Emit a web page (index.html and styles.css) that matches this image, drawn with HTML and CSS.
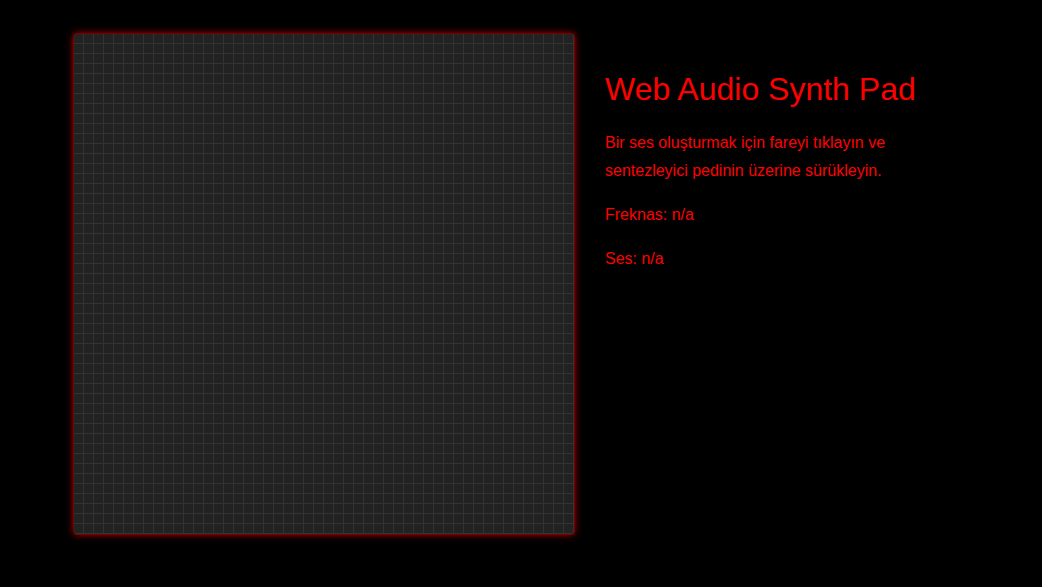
FILE: index.html
```html
<!DOCTYPE html>
<html lang="tr">
<head>
<meta charset="utf-8">
<title>Web Audio Synth Pad</title>
<link rel="stylesheet" href="styles.css">
</head>
<body>
<div class="app">
  <div class="pad"></div>
  <div class="info">
    <h1 class="title">Web Audio Synth Pad</h1>
    <p class="text">Bir ses oluşturmak için fareyi tıklayın ve sentezleyici pedinin üzerine sürükleyin.</p>
    <p class="text">Freknas: <span>n/a</span></p>
    <p class="text">Ses: <span>n/a</span></p>
  </div>
</div>
</body>
</html>
```
FILE: styles.css
```css
html, body {
  margin: 0;
  padding: 0;
  background: #000;
  height: 100%;
}
body {
  font-family: "Liberation Sans", Arial, sans-serif;
  color: #ff0000;
}
.app {
  display: flex;
  align-items: flex-start;
  padding: 33px 0 0 73px;
  gap: 30px;
}
.pad {
  flex: none;
  width: 500px;
  height: 500px;
  border: 1px solid #7a0000;
  border-radius: 4px;
  background-color: #222;
  background-image:
    linear-gradient(to right, transparent 9px, #333 9px),
    linear-gradient(to bottom, transparent 9px, #333 9px);
  background-size: 10px 10px;
  box-shadow: 0 0 7px #a00000;
}
.info {
  width: 340px;
  padding-top: 38px;
}
.title {
  margin: 0 0 21px;
  font-size: 32px;
  font-weight: normal;
  line-height: 37px;
}
.text {
  margin: 0 0 16px;
  font-size: 16px;
  line-height: 28px;
}
```
